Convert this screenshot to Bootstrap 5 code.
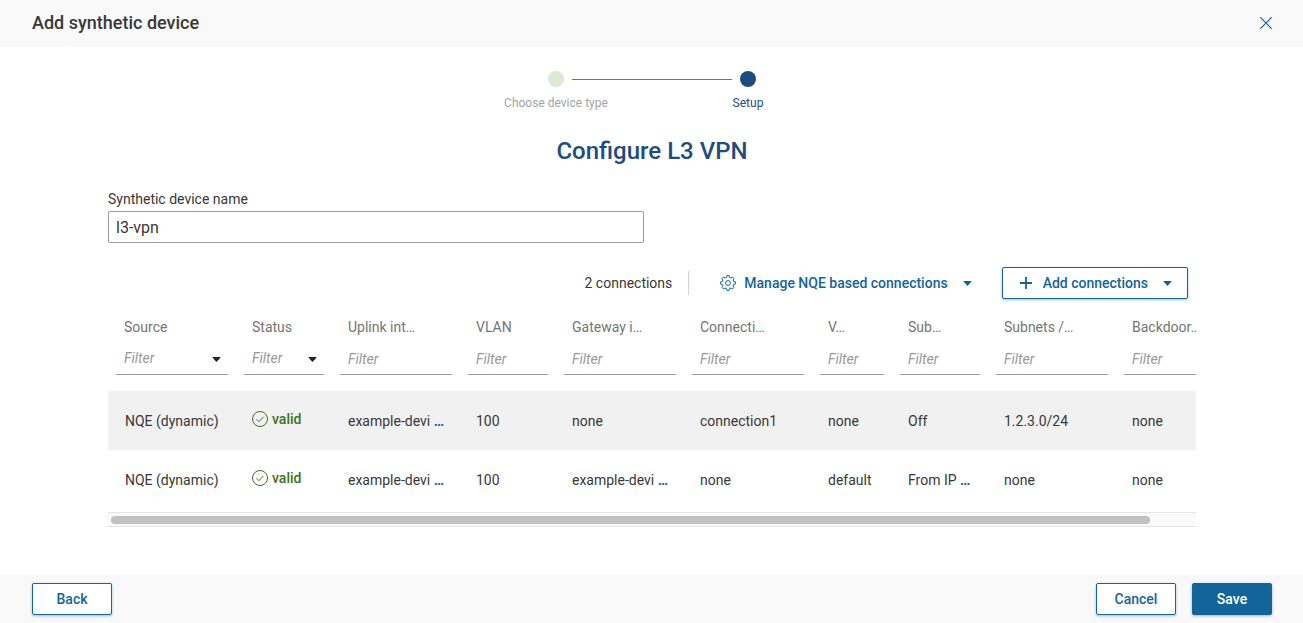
<!DOCTYPE html>
<html lang="en">
<head>
<meta charset="utf-8">
<meta name="viewport" content="width=device-width, initial-scale=1">
<title>Add synthetic device</title>
<link href="https://cdn.jsdelivr.net/npm/bootstrap@5.3.0/dist/css/bootstrap.min.css" rel="stylesheet">
<style>
  :root { --navy: #1d4d7f; --blue: #14649c; --ink: #383838; --green: #3c7320; }
  body { font-family: Roboto, "Liberation Sans", sans-serif; font-size: 14px; line-height: 20px; color: var(--ink); background: #fff; }
  .dialog-bar { background: #f9f9f9; padding-left: 32px; padding-right: 31px; }
  .dialog-head { height: 47px; padding-bottom: 2px; }
  .dialog-head h1 { font-size: 18px; line-height: 24px; font-weight: 500; }
  .dialog-foot { height: 48px; }
  .close-btn { width: 12px; height: 12px; color: var(--blue); }
  .main-area { padding: 0 107px 0 108px; }

  .steps { padding-top: 24px; }
  .step { width: 192px; font-size: 12px; line-height: 16px; color: #a3a3a3; }
  .step.current { color: var(--navy); }
  .dot { width: 16px; height: 16px; background: #dde9d3; }
  .current .dot { background: var(--navy); }
  .rail { flex: 1 1 0; height: 1px; }
  .rail.on { background: #757575; }
  h2 { font-size: 24px; line-height: 32px; font-weight: 500; color: var(--navy); }

  .name-field { width: 536px; max-width: 100%; }
  .name-field label { line-height: 16px; }
  .name-field .form-control { height: 32px; padding: 0 7px; font-size: 16px; color: var(--ink); border: 1px solid #9a9a9a; border-radius: 2px; }

  .act { --bs-btn-font-size: 14px; --bs-btn-line-height: 20px; --bs-btn-font-weight: 500; --bs-btn-border-radius: 2px; height: 32px; padding: 0; color: var(--blue); }
  .act-line { background: #fff; border-color: var(--blue); box-shadow: 0 1px 3px rgba(20, 100, 156, .4); }
  .act-solid { background: var(--blue); border-color: var(--blue); color: #fff; box-shadow: 0 1px 3px rgba(0, 0, 0, .3); }
  .act-foot { width: 80px; }
  .act-manage { padding: 0 6px 0 7px; gap: 8px; }
  .act-add { padding: 0 15px 0 16px; gap: 10px; }
  .act .caret { margin-left: 7px; }
  .act-add .caret { margin-left: 5px; }
  .sep { width: 1px; height: 24px; background: #d2d2d2; }

  .grid-area { margin-top: 12px; }
  .grid-scroll { overflow-x: auto; padding-bottom: 3px; border-top-left-radius: 2px; scrollbar-width: none; }
  .grid-scroll::-webkit-scrollbar { display: none; }
  .h-track { height: 15px; padding: 3px; background: #fafafa; border: solid #e6e6e6; border-width: 1px 0; }
  .h-thumb { width: 96%; height: 8px; background: #c1c1c1; }
  .conn { width: 1136px; table-layout: fixed; }
  .col-s { width: 80px; } .col-m { width: 96px; } .col-l { width: 128px; }
  .conn th { font-weight: 400; color: #757575; padding: 0 8px; height: 80px; vertical-align: top; white-space: nowrap; }
  .conn th > span { display: block; padding: 6px 8px; }
  .conn td { height: 59px; padding: 0 0 0 16px; vertical-align: middle; white-space: nowrap; }
  .conn td:first-child { padding-left: 17px; }
  .conn td.state { padding-bottom: 3px; }
  .conn tbody tr:first-child { background: #f1f1f1; }
  .filter { display: block; width: 100%; height: 32px; margin: 0; padding: 0 8px; border: 0; border-bottom: 1px solid #9a9a9a; border-radius: 0; background: transparent; font-style: italic; color: #999; }
  .filter::placeholder { color: #999; opacity: 1; }
  select.filter { appearance: none; padding-bottom: 2px; background: url("data:image/svg+xml,%3Csvg xmlns='http://www.w3.org/2000/svg' width='9' height='5'%3E%3Cpath d='M.8 0h7.400q.8 0 .3.600L5 4.600q-.5.500-1 0L.5.600Q0 0 .8 0z' fill='%23222'/%3E%3C/svg%3E") no-repeat right 7px top 14px; }
  .more { color: var(--blue); font-weight: 700; text-decoration: none; }
  .ok { color: var(--green); font-weight: 500; gap: 4px; }
</style>
</head>
<body class="d-flex flex-column min-vh-100">

<header class="dialog-bar dialog-head d-flex align-items-center justify-content-between">
  <h1 class="m-0">Add synthetic device</h1>
  <button type="button" class="close-btn btn p-0 border-0 d-flex" aria-label="Close">
    <svg width="12" height="12" viewBox="0 0 12 12" stroke="currentColor" stroke-width="1.200" fill="none"><path d="M.3.3l11.400 11.400M11.700.3L.3 11.700"/></svg>
  </button>
</header>

<main class="main-area flex-grow-1">
  <ol class="steps list-unstyled d-flex justify-content-center mb-0">
    <li class="step text-center">
      <div class="d-flex align-items-center gap-2 mb-2"><span class="rail"></span><span class="dot rounded-circle"></span><span class="rail on"></span></div>
      Choose device type
    </li>
    <li class="step current text-center">
      <div class="d-flex align-items-center gap-2 mb-2"><span class="rail on"></span><span class="dot rounded-circle"></span><span class="rail"></span></div>
      Setup
    </li>
  </ol>

  <h2 class="text-center mt-4 mb-4">Configure L3 VPN</h2>

  <div class="name-field">
    <label for="device-name" class="d-block pb-1">Synthetic device name</label>
    <input id="device-name" type="text" class="form-control" value="l3-vpn">
  </div>

  <div class="d-flex align-items-center justify-content-end mt-4 pe-2">
    <span class="me-3">2 connections</span>
    <span class="sep"></span>
    <button type="button" class="btn act act-manage border-0 d-flex align-items-center ms-4 me-4">
      <svg width="16" height="16" viewBox="0 0 16 16" fill="none" stroke="currentColor" stroke-linejoin="round">
        <path d="M6.560 2.340 6.900.6h2.200l.34 1.740 1.540.64 1.480-.99 1.550 1.550-.99 1.480.64 1.540 1.740.34v2.200l-1.740.34-.64 1.540.99 1.480-1.550 1.550-1.480-.99-1.540.64L9.100 15.400H6.900l-.34-1.740-1.540-.64-1.480.99-1.550-1.550.99-1.480-.64-1.540L.6 9.100V6.900l1.740-.34.64-1.540-.99-1.480 1.550-1.550 1.480.99z"/><circle cx="8" cy="8" r="2.400"/>
      </svg>
      <span>Manage NQE based connections</span>
      <svg class="caret" width="9" height="5" viewBox="0 0 9 5" fill="currentColor"><path d="M.8 0h7.400q.8 0 .3.600L5 4.600q-.5.500-1 0L.5.600Q0 0 .8 0z"/></svg>
    </button>
    <button type="button" class="btn act act-line act-add d-flex align-items-center">
      <svg width="14" height="14" viewBox="0 0 14 14" stroke="currentColor" stroke-width="1.800"><path d="M7 1v12M1 7h12"/></svg>
      <span>Add connections</span>
      <svg class="caret" width="9" height="5" viewBox="0 0 9 5" fill="currentColor"><path d="M.8 0h7.400q.8 0 .3.600L5 4.600q-.5.500-1 0L.5.600Q0 0 .8 0z"/></svg>
    </button>
  </div>

  <div class="grid-area">
    <div class="grid-scroll">
      <table class="conn">
        <colgroup>
          <col class="col-l"><col class="col-m"><col class="col-l"><col class="col-m"><col class="col-l"><col class="col-l"><col class="col-s"><col class="col-m"><col class="col-l"><col class="col-l">
        </colgroup>
        <thead>
          <tr>
            <th><span>Source</span><select class="filter" aria-label="Filter source"><option>Filter</option></select></th>
            <th><span>Status</span><select class="filter" aria-label="Filter status"><option>Filter</option></select></th>
            <th><span>Uplink int…</span><input class="filter" type="text" placeholder="Filter" aria-label="Filter uplink"></th>
            <th><span>VLAN</span><input class="filter" type="text" placeholder="Filter" aria-label="Filter VLAN"></th>
            <th><span>Gateway i…</span><input class="filter" type="text" placeholder="Filter" aria-label="Filter gateway"></th>
            <th><span>Connecti…</span><input class="filter" type="text" placeholder="Filter" aria-label="Filter connection"></th>
            <th><span>V…</span><input class="filter" type="text" placeholder="Filter" aria-label="Filter V"></th>
            <th><span>Sub…</span><input class="filter" type="text" placeholder="Filter" aria-label="Filter sub"></th>
            <th><span>Subnets /…</span><input class="filter" type="text" placeholder="Filter" aria-label="Filter subnets"></th>
            <th><span>Backdoor…</span><input class="filter" type="text" placeholder="Filter" aria-label="Filter backdoor"></th>
          </tr>
        </thead>
        <tbody>
          <tr>
            <td>NQE (dynamic)</td>
            <td class="state"><span class="ok d-flex align-items-center"><svg width="16" height="16" viewBox="0 0 16 16" fill="none" stroke="currentColor"><circle cx="8" cy="8" r="7.500"/><path d="M4.500 8.300l2.400 2.400 4.700-4.900"/></svg>valid</span></td>
            <td>example-devi <a class="more" href="#">…</a></td>
            <td>100</td>
            <td>none</td>
            <td>connection1</td>
            <td>none</td>
            <td>Off</td>
            <td>1.2.3.0/24</td>
            <td>none</td>
          </tr>
          <tr>
            <td>NQE (dynamic)</td>
            <td class="state"><span class="ok d-flex align-items-center"><svg width="16" height="16" viewBox="0 0 16 16" fill="none" stroke="currentColor"><circle cx="8" cy="8" r="7.500"/><path d="M4.500 8.300l2.400 2.400 4.700-4.900"/></svg>valid</span></td>
            <td>example-devi <a class="more" href="#">…</a></td>
            <td>100</td>
            <td>example-devi <a class="more" href="#">…</a></td>
            <td>none</td>
            <td>default</td>
            <td>From IP <a class="more" href="#">…</a></td>
            <td>none</td>
            <td>none</td>
          </tr>
        </tbody>
      </table>
    </div>
    <div class="h-track" aria-hidden="true"><div class="h-thumb rounded-pill"></div></div>
  </div>
</main>

<footer class="dialog-bar dialog-foot d-flex align-items-center gap-3">
  <button type="button" class="btn act act-line act-foot me-auto">Back</button>
  <button type="button" class="btn act act-line act-foot">Cancel</button>
  <button type="button" class="btn act act-solid act-foot">Save</button>
</footer>

<script src="https://cdn.jsdelivr.net/npm/bootstrap@5.3.0/dist/js/bootstrap.bundle.min.js"></script>
</body>
</html>
